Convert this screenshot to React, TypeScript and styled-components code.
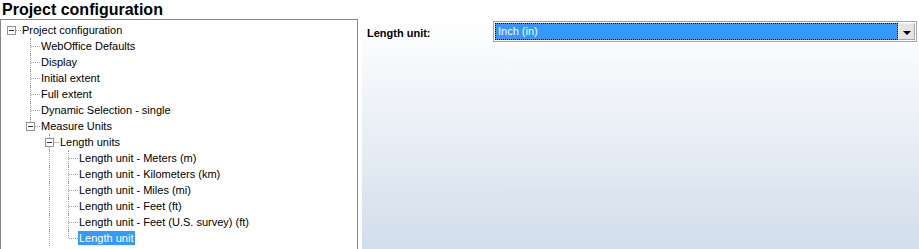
import React from "react";
import styled, { createGlobalStyle, css } from "styled-components";

const GlobalStyle = createGlobalStyle`
  html, body { margin: 0; padding: 0; background: #ffffff; }
  body { font-family: "Liberation Sans", Arial, sans-serif; overflow: hidden; }
  #root { height: 100vh; }
`;

const Page = styled.div`
  height: 100vh;
  display: flex;
  flex-direction: column;
`;

const Title = styled.h1`
  margin: 0;
  padding-left: 2px;
  height: 19px;
  font-size: 16px;
  line-height: 19px;
  font-weight: bold;
  color: #000;
  white-space: nowrap;
`;

const Body = styled.div`
  flex: 1;
  display: flex;
  gap: 4px;
  min-height: 0;
`;

const TreePanel = styled.div`
  width: 358px;
  box-sizing: border-box;
  border: 1px solid #828790;
  border-bottom: none;
  padding: 2px 0 0 1px;
  overflow: hidden;
  background: #fff;
`;

const Row = styled.div`
  display: flex;
  align-items: center;
  height: 16px;
`;

type VLine = "none" | "full" | "half";

const Cell = styled.div<{ $v: VLine; $h: boolean }>`
  position: relative;
  flex: 0 0 19px;
  height: 16px;
  ${(p) =>
    p.$v !== "none" &&
    css`
      &::before {
        content: "";
        position: absolute;
        left: 9px;
        top: 0;
        height: ${p.$v === "full" ? "16px" : "8px"};
        border-left: 1px dotted #a0a0a0;
      }
    `}
  ${(p) =>
    p.$h &&
    css`
      &::after {
        content: "";
        position: absolute;
        left: 10px;
        right: 0;
        top: 8px;
        border-top: 1px dotted #a0a0a0;
      }
    `}
`;

const ExpandBox = styled.span`
  position: absolute;
  left: 5px;
  top: 4px;
  width: 9px;
  height: 9px;
  box-sizing: border-box;
  border: 1px solid #939393;
  background: #fff;
  z-index: 1;
  &::after {
    content: "";
    position: absolute;
    left: 1px;
    right: 1px;
    top: 3px;
    height: 1px;
    background: #22324e;
  }
`;

const Label = styled.span<{ $selected?: boolean }>`
  display: inline-block;
  padding: 0 2px 0 1px;
  font-size: 11px;
  line-height: 14px;
  white-space: nowrap;
  color: ${(p) => (p.$selected ? "#ffffff" : "#000000")};
  background: ${(p) => (p.$selected ? "#3399ff" : "transparent")};
`;

const DetailPanel = styled.div`
  flex: 1;
  padding: 2px 2px 0 5px;
  background: linear-gradient(to bottom, #ffffff 0%, #d2deeb 100%);
`;

const FieldRow = styled.div`
  display: grid;
  grid-template-columns: 126px 1fr;
  align-items: center;
`;

const FieldLabel = styled.span`
  font-size: 11px;
  font-weight: bold;
  color: #000;
  padding-top: 2px;
`;

const Combo = styled.div`
  display: flex;
  height: 21px;
  box-sizing: border-box;
  border: 1px solid #a5a5a5;
  padding: 1px;
  background: #fff;
`;

const ComboValue = styled.div`
  flex: 1;
  box-sizing: border-box;
  background: #3399ff;
  border: 1px dotted #000;
  color: #fff;
  font-size: 11px;
  line-height: 15px;
  padding-left: 2px;
`;

const ComboButton = styled.div`
  flex: 0 0 17px;
  box-sizing: border-box;
  border: 1px solid #a8a8a8;
  border-top-color: #f0f0f0;
  border-left-color: #f0f0f0;
  background: #e3e3e3;
  display: flex;
  align-items: center;
  justify-content: center;
  padding-top: 2px;
  &::after {
    content: "";
    width: 0;
    height: 0;
    border-left: 4px solid transparent;
    border-right: 4px solid transparent;
    border-top: 4px solid #000;
  }
`;

type Node = {
  label: string;
  children?: Node[];
  selected?: boolean;
  continues?: boolean;
};

const tree: Node = {
  label: "Project configuration",
  children: [
    { label: "WebOffice Defaults" },
    { label: "Display" },
    { label: "Initial extent" },
    { label: "Full extent" },
    { label: "Dynamic Selection - single" },
    {
      label: "Measure Units",
      children: [
        {
          label: "Length units",
          continues: true,
          children: [
            { label: "Length unit - Meters (m)" },
            { label: "Length unit - Kilometers (km)" },
            { label: "Length unit - Miles (mi)" },
            { label: "Length unit - Feet (ft)" },
            { label: "Length unit - Feet (U.S. survey) (ft)" },
            { label: "Length unit", selected: true },
          ],
        },
      ],
    },
  ],
};

type FlatRow = {
  node: Node;
  level: number;
  last: boolean;
  ancestorsLast: boolean[];
};

function flatten(node: Node, level: number, last: boolean, ancestorsLast: boolean[], out: FlatRow[]) {
  out.push({ node, level, last, ancestorsLast });
  const kids = node.children ?? [];
  kids.forEach((c, i) => {
    const isLast = i === kids.length - 1 && !c.continues;
    flatten(c, level + 1, isLast, [...ancestorsLast, last], out);
  });
  return out;
}

const rows = flatten(tree, 0, true, [], []);

function TreeRow({ r }: { r: FlatRow }) {
  const guides = [];
  // column k carries a line when the ancestor at level k still has siblings below it
  for (let k = 0; k < r.level; k++) {
    const ancestorIsLast = k === 0 ? true : r.ancestorsLast[k] ?? true;
    guides.push(<Cell key={k} $v={ancestorIsLast ? "none" : "full"} $h={false} />);
  }
  const v: VLine = r.level === 0 ? "none" : r.last ? "half" : "full";
  return (
    <Row>
      {guides}
      <Cell $v={v} $h>
        {r.node.children && <ExpandBox />}
      </Cell>
      <Label $selected={r.node.selected}>{r.node.label}</Label>
    </Row>
  );
}

export default function App() {
  return (
    <>
      <GlobalStyle />
      <Page>
        <Title>Project configuration</Title>
        <Body>
          <TreePanel>
            {rows.map((r, i) => (
              <TreeRow key={i} r={r} />
            ))}
          </TreePanel>
          <DetailPanel>
            <FieldRow>
              <FieldLabel>Length unit:</FieldLabel>
              <Combo>
                <ComboValue>Inch (in)</ComboValue>
                <ComboButton />
              </Combo>
            </FieldRow>
          </DetailPanel>
        </Body>
      </Page>
    </>
  );
}
